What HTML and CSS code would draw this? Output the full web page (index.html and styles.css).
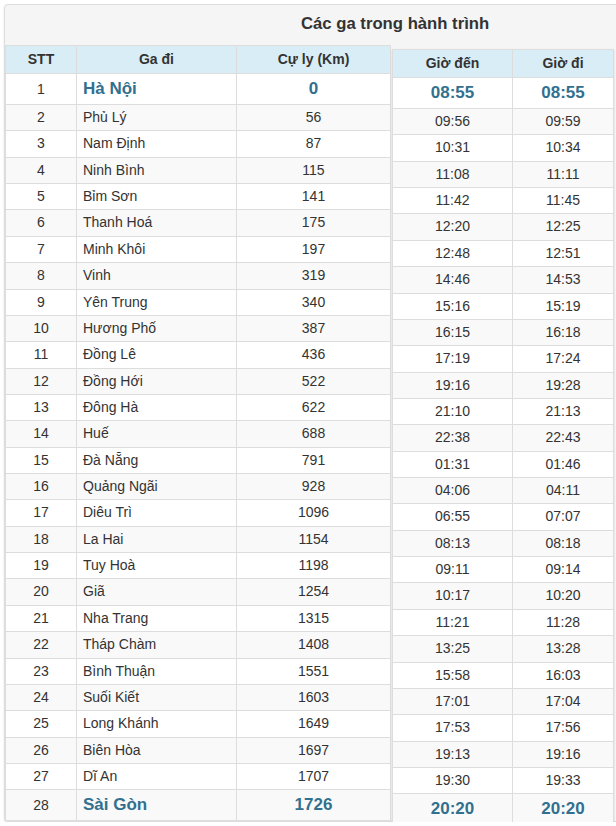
FILE: index.html
```html
<!DOCTYPE html>
<html lang="vi">
<head>
<meta charset="utf-8">
<title>Các ga trong hành trình</title>
<link rel="stylesheet" href="styles.css">
</head>
<body>
<div class="panel">
  <div class="panel-title">Các ga trong hành trình</div>
  <div class="tables">
    <table class="grid grid-left">
      <colgroup><col class="c-stt"><col class="c-ga"><col class="c-km"></colgroup>
      <thead><tr><th>STT</th><th>Ga đi</th><th>Cự ly (Km)</th></tr></thead>
      <tbody>
        <tr class="hl"><td class="ctr plain">1</td><td class="name">Hà Nội</td><td class="ctr">0</td></tr>
        <tr><td class="ctr">2</td><td class="name">Phủ Lý</td><td class="ctr">56</td></tr>
        <tr><td class="ctr">3</td><td class="name">Nam Định</td><td class="ctr">87</td></tr>
        <tr><td class="ctr">4</td><td class="name">Ninh Bình</td><td class="ctr">115</td></tr>
        <tr><td class="ctr">5</td><td class="name">Bỉm Sơn</td><td class="ctr">141</td></tr>
        <tr><td class="ctr">6</td><td class="name">Thanh Hoá</td><td class="ctr">175</td></tr>
        <tr><td class="ctr">7</td><td class="name">Minh Khôi</td><td class="ctr">197</td></tr>
        <tr><td class="ctr">8</td><td class="name">Vinh</td><td class="ctr">319</td></tr>
        <tr><td class="ctr">9</td><td class="name">Yên Trung</td><td class="ctr">340</td></tr>
        <tr><td class="ctr">10</td><td class="name">Hương Phố</td><td class="ctr">387</td></tr>
        <tr><td class="ctr">11</td><td class="name">Đồng Lê</td><td class="ctr">436</td></tr>
        <tr><td class="ctr">12</td><td class="name">Đồng Hới</td><td class="ctr">522</td></tr>
        <tr><td class="ctr">13</td><td class="name">Đông Hà</td><td class="ctr">622</td></tr>
        <tr><td class="ctr">14</td><td class="name">Huế</td><td class="ctr">688</td></tr>
        <tr><td class="ctr">15</td><td class="name">Đà Nẵng</td><td class="ctr">791</td></tr>
        <tr><td class="ctr">16</td><td class="name">Quảng Ngãi</td><td class="ctr">928</td></tr>
        <tr><td class="ctr">17</td><td class="name">Diêu Trì</td><td class="ctr">1096</td></tr>
        <tr><td class="ctr">18</td><td class="name">La Hai</td><td class="ctr">1154</td></tr>
        <tr><td class="ctr">19</td><td class="name">Tuy Hoà</td><td class="ctr">1198</td></tr>
        <tr><td class="ctr">20</td><td class="name">Giã</td><td class="ctr">1254</td></tr>
        <tr><td class="ctr">21</td><td class="name">Nha Trang</td><td class="ctr">1315</td></tr>
        <tr><td class="ctr">22</td><td class="name">Tháp Chàm</td><td class="ctr">1408</td></tr>
        <tr><td class="ctr">23</td><td class="name">Bình Thuận</td><td class="ctr">1551</td></tr>
        <tr><td class="ctr">24</td><td class="name">Suối Kiết</td><td class="ctr">1603</td></tr>
        <tr><td class="ctr">25</td><td class="name">Long Khánh</td><td class="ctr">1649</td></tr>
        <tr><td class="ctr">26</td><td class="name">Biên Hòa</td><td class="ctr">1697</td></tr>
        <tr><td class="ctr">27</td><td class="name">Dĩ An</td><td class="ctr">1707</td></tr>
        <tr class="hl"><td class="ctr plain">28</td><td class="name">Sài Gòn</td><td class="ctr">1726</td></tr>
      </tbody>
    </table>
    <table class="grid grid-right">
      <colgroup><col class="c-den"><col class="c-di"></colgroup>
      <thead><tr><th>Giờ đến</th><th>Giờ đi</th></tr></thead>
      <tbody>
        <tr class="hl"><td>08:55</td><td>08:55</td></tr>
        <tr><td>09:56</td><td>09:59</td></tr>
        <tr><td>10:31</td><td>10:34</td></tr>
        <tr><td>11:08</td><td>11:11</td></tr>
        <tr><td>11:42</td><td>11:45</td></tr>
        <tr><td>12:20</td><td>12:25</td></tr>
        <tr><td>12:48</td><td>12:51</td></tr>
        <tr><td>14:46</td><td>14:53</td></tr>
        <tr><td>15:16</td><td>15:19</td></tr>
        <tr><td>16:15</td><td>16:18</td></tr>
        <tr><td>17:19</td><td>17:24</td></tr>
        <tr><td>19:16</td><td>19:28</td></tr>
        <tr><td>21:10</td><td>21:13</td></tr>
        <tr><td>22:38</td><td>22:43</td></tr>
        <tr><td>01:31</td><td>01:46</td></tr>
        <tr><td>04:06</td><td>04:11</td></tr>
        <tr><td>06:55</td><td>07:07</td></tr>
        <tr><td>08:13</td><td>08:18</td></tr>
        <tr><td>09:11</td><td>09:14</td></tr>
        <tr><td>10:17</td><td>10:20</td></tr>
        <tr><td>11:21</td><td>11:28</td></tr>
        <tr><td>13:25</td><td>13:28</td></tr>
        <tr><td>15:58</td><td>16:03</td></tr>
        <tr><td>17:01</td><td>17:04</td></tr>
        <tr><td>17:53</td><td>17:56</td></tr>
        <tr><td>19:13</td><td>19:16</td></tr>
        <tr><td>19:30</td><td>19:33</td></tr>
        <tr class="hl"><td>20:20</td><td>20:20</td></tr>
      </tbody>
    </table>
  </div>
</div>
</body>
</html>
```
FILE: styles.css
```css
html, body {
  margin: 0;
  padding: 0;
  overflow: hidden;
  background: #ffffff;
}
body {
  font-family: "Liberation Sans", Arial, sans-serif;
  font-size: 14px;
  color: #333333;
}
.panel {
  margin: 4px 0 0 4px;
  width: 640px;
  background: #f5f5f5;
  border: 1px solid #dddddd;
  border-radius: 4px;
  box-shadow: 0 1px 2px rgba(0, 0, 0, 0.12);
}
.panel-title {
  height: 40px;
  line-height: 38px;
  padding-left: 296px;
  font-size: 16.7px;
  font-weight: bold;
  color: #333333;
}
.tables {
  display: flex;
  align-items: flex-start;
}
.grid {
  border-collapse: collapse;
  table-layout: fixed;
  background: #ffffff;
}
.grid th, .grid td {
  border: 1px solid #dddddd;
  padding: 3px 6px;
  line-height: 19.36px;
  white-space: nowrap;
  overflow: hidden;
}
.grid th {
  background: #d9edf7;
  font-weight: bold;
  text-align: center;
  line-height: 21px;
}
.grid tbody tr:nth-child(even) td {
  background: #f9f9f9;
}
.grid tr.hl td {
  font-size: 17px;
  font-weight: bold;
  color: #31708f;
  line-height: 24px;
}
.grid tr.hl td.plain {
  font-size: 14px;
  font-weight: normal;
  color: #333333;
}
.grid-left {
  width: 385px;
}
.c-stt { width: 71px; }
.c-ga { width: 160px; }
.c-km { width: 154px; }
.ctr { text-align: center; }
.name { text-align: left; padding-left: 7px; }
.grid-right {
  width: 221px;
  margin: 4px 0 -4px 1px;
  box-shadow: 0 1px 2px rgba(0, 0, 0, 0.15);
}
.grid-right td { text-align: center; }
.c-den { width: 120px; }
.c-di { width: 101px; }
```
